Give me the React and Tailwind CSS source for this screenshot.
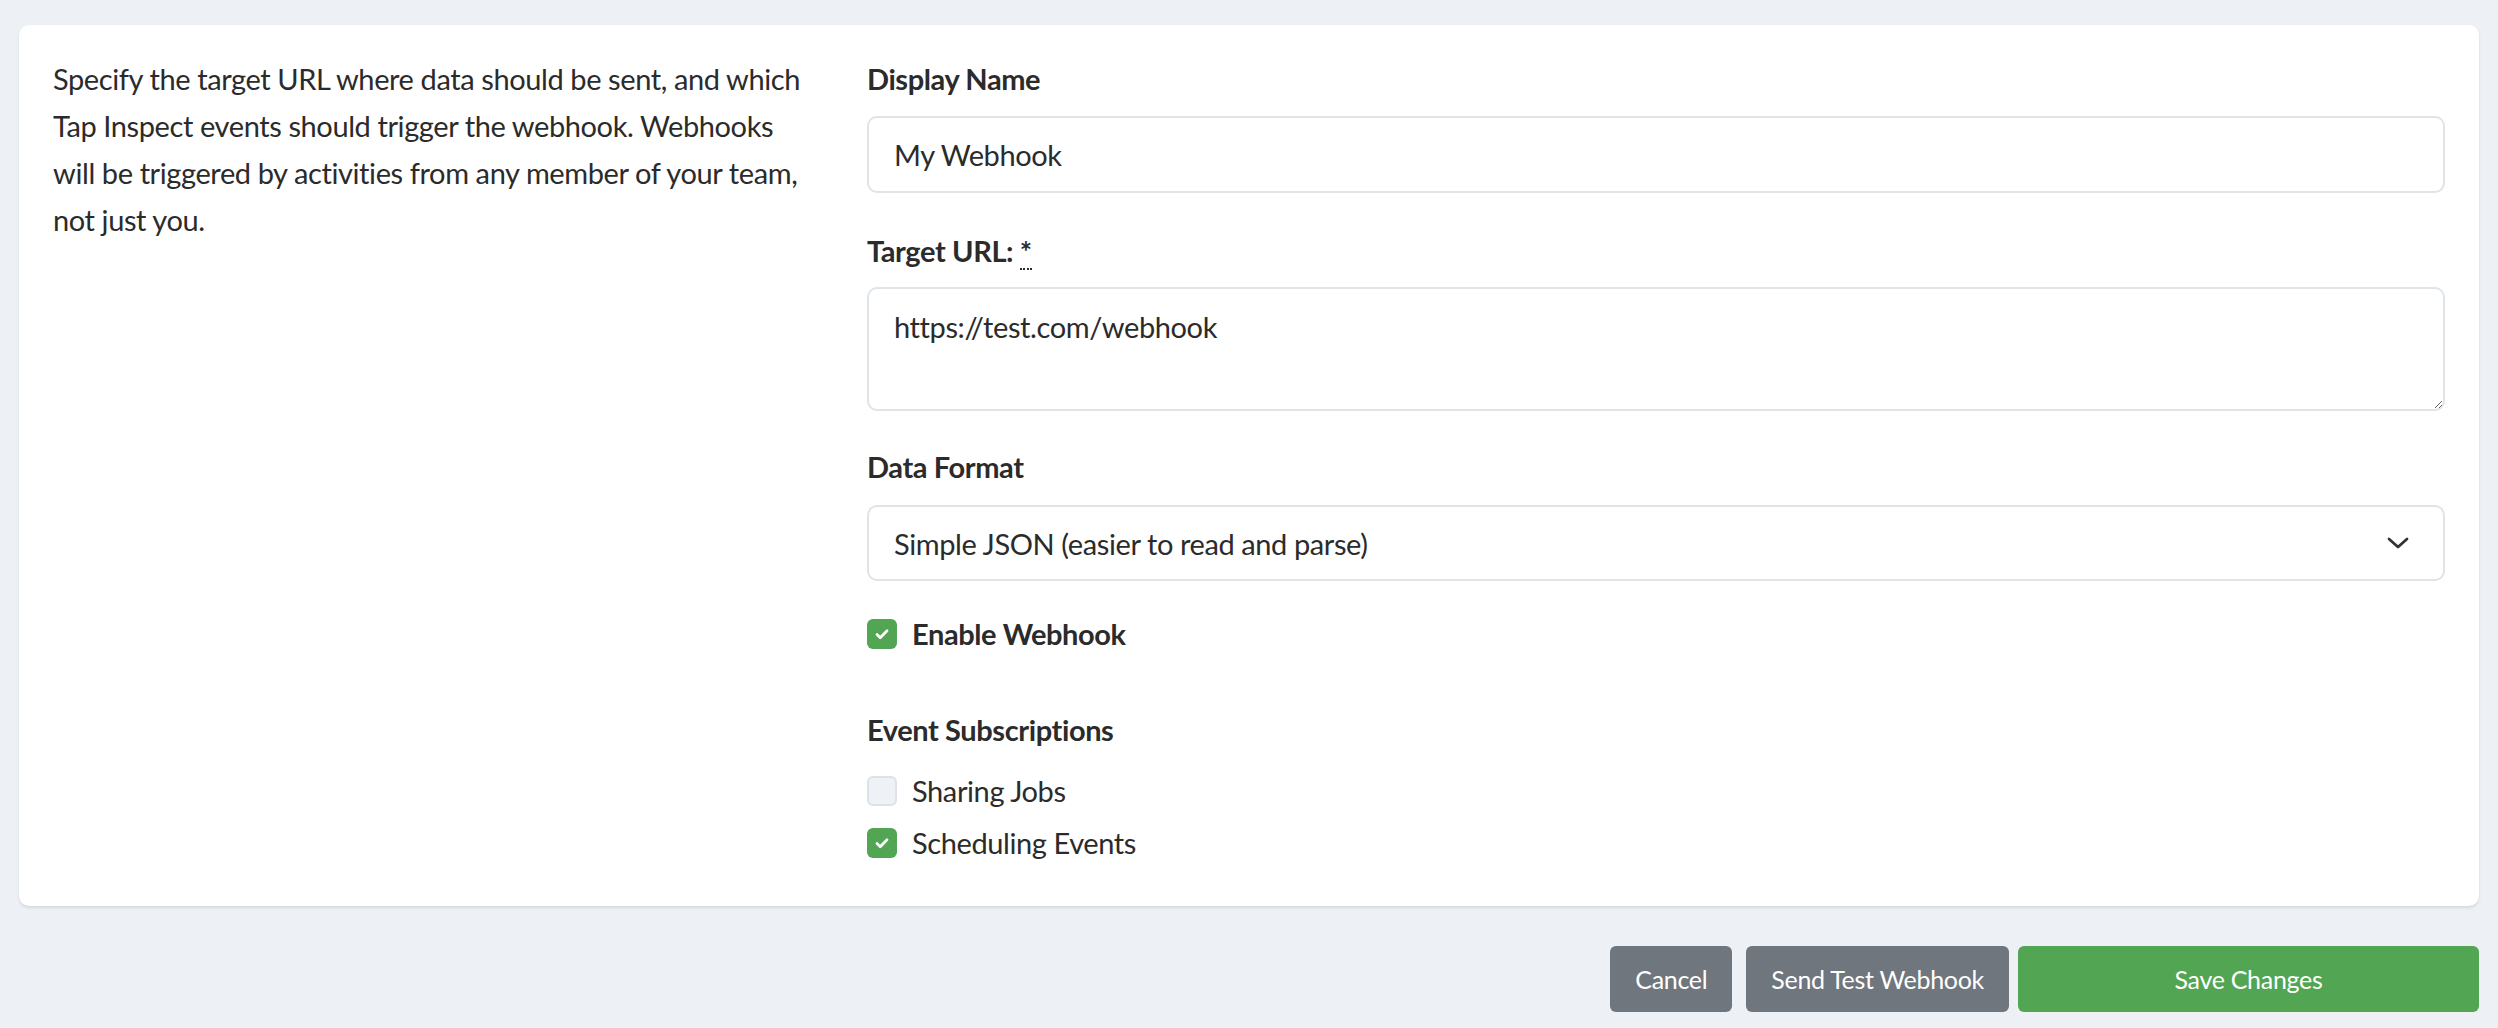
import { useState } from "react";

function Check({ checked, onChange }) {
  return (
    <button
      type="button"
      onClick={onChange}
      className={
        "w-[30px] h-[30px] rounded-[6px] flex items-center justify-center shrink-0 " +
        (checked ? "bg-[#52a552]" : "bg-[#eef1f5] border-2 border-[#dde2e8]")
      }
    >
      {checked && (
        <svg width="20" height="20" viewBox="0 0 16 16" fill="none">
          <path d="M4 8.4l2.6 2.6L12 5.4" stroke="#fff" strokeWidth="2.2" strokeLinecap="round" strokeLinejoin="round" />
        </svg>
      )}
    </button>
  );
}

export default function App() {
  const [name, setName] = useState("My Webhook");
  const [url, setUrl] = useState("https://test.com/webhook");
  const [enabled, setEnabled] = useState(true);
  const [sharing, setSharing] = useState(false);
  const [scheduling, setScheduling] = useState(true);

  const font = { fontFamily: "Lato, 'Open Sans', sans-serif" };

  return (
    <div className="min-h-screen bg-[#edf0f5] pt-[25px] px-[19px] text-[#2b2b2b] text-[29px] leading-[47px] tracking-[-0.4px]" style={font}>
      {/* Form card */}
      <div className="bg-white rounded-[10px] shadow-[0_2px_3px_rgba(0,0,0,0.10)] px-[34px] pt-[30px] pb-[40px] grid grid-cols-[765px_1fr] gap-x-[49px]">
        <p>
          Specify the target URL where data should be sent, and which Tap Inspect events should trigger the webhook. Webhooks will be triggered by activities from any member of your team, not just you.
        </p>

        <div className="flex flex-col">
          <label className="font-bold">Display Name</label>
          <input
            value={name}
            onChange={(e) => setName(e.target.value)}
            className="mt-[14px] h-[77px] px-[25px] border-2 border-[#dfe4e9] rounded-[10px] outline-none"
          />

          <label className="font-bold mt-[34px]">
            Target URL:{" "}
            <abbr title="required" className="no-underline border-b-2 border-dotted border-[#2b2b2b]">*</abbr>
          </label>
          <textarea
            value={url}
            onChange={(e) => setUrl(e.target.value)}
            className="mt-[13px] h-[124px] px-[25px] py-[14px] border-2 border-[#dfe4e9] rounded-[10px] outline-none"
          />

          <label className="font-bold mt-[32px]">Data Format</label>
          <div className="mt-[15px] h-[76px] px-[25px] border-2 border-[#dfe4e9] rounded-[10px] flex items-center justify-between">
            <span>Simple JSON (easier to read and parse)</span>
            <svg width="24" height="16" viewBox="0 0 24 16" fill="none" className="mr-[8px]">
              <path d="M3 4l9 8 9-8" stroke="#333" strokeWidth="2.8" strokeLinecap="round" strokeLinejoin="round" />
            </svg>
          </div>

          <div className="flex items-center gap-[15px] mt-[29px]">
            <Check checked={enabled} onChange={() => setEnabled(!enabled)} />
            <span className="font-bold">Enable Webhook</span>
          </div>

          <div className="font-bold mt-[49px]">Event Subscriptions</div>
          <div className="flex items-center gap-[15px] mt-[14px]">
            <Check checked={sharing} onChange={() => setSharing(!sharing)} />
            <span>Sharing Jobs</span>
          </div>
          <div className="flex items-center gap-[15px] mt-[5px]">
            <Check checked={scheduling} onChange={() => setScheduling(!scheduling)} />
            <span>Scheduling Events</span>
          </div>
        </div>
      </div>

      {/* Actions */}
      <div className="flex justify-end mt-[40px] text-[25px] tracking-[-0.3px] text-white">
        <button className="h-[66px] px-[25px] rounded-[6px] bg-[#6f767e] mr-[14px]">Cancel</button>
        <button className="h-[66px] px-[25px] rounded-[6px] bg-[#6f767e] mr-[9px]">Send Test Webhook</button>
        <button className="h-[66px] w-[461px] rounded-[6px] bg-[#52a552]">Save Changes</button>
      </div>
    </div>
  );
}
